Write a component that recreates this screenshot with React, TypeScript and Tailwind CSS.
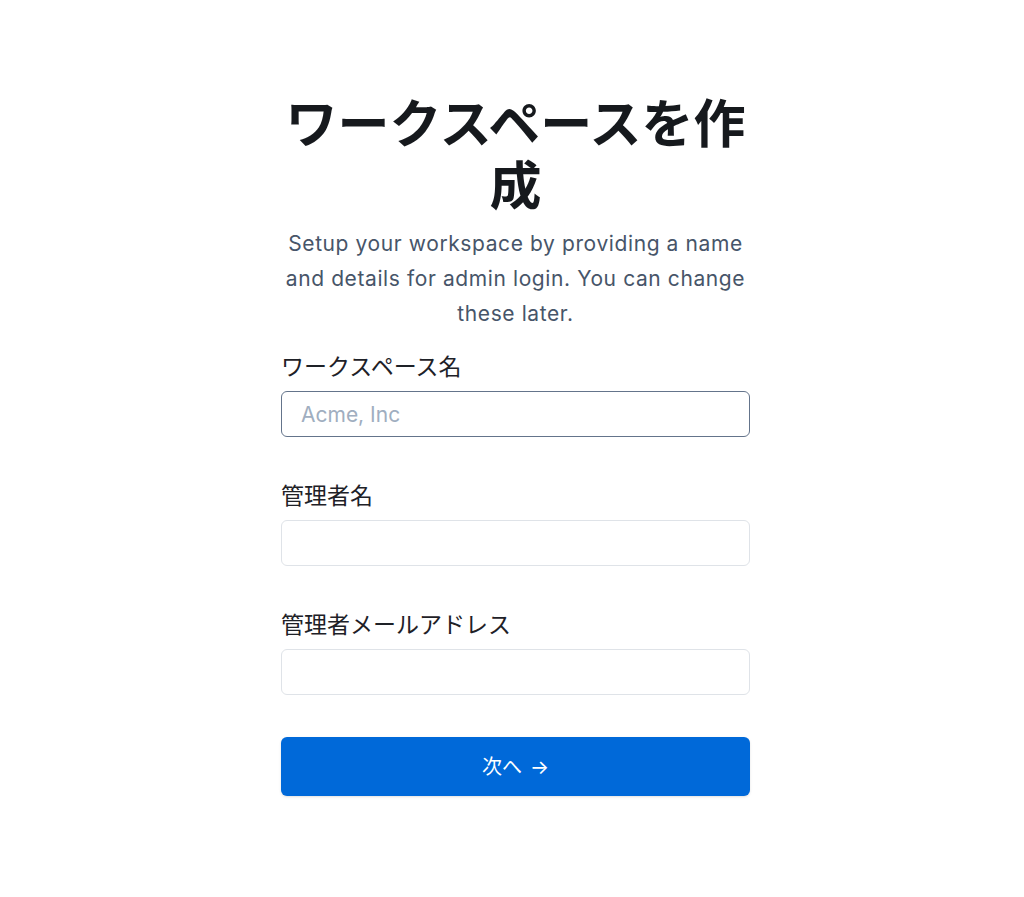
import React from 'react';

const font = { fontFamily: 'Inter, "Noto Sans CJK JP", sans-serif' };

const Field: React.FC<{ label: string; placeholder?: string; active?: boolean }> = ({ label, placeholder, active }) => (
  <div className="flex flex-col">
    <label className="text-[23px] leading-[30px] text-[#1e2127]">{label}</label>
    <input
      placeholder={placeholder}
      className={`mt-[9px] h-[46px] w-full rounded-[6px] border px-[19px] text-[21px] text-gray-900 outline-none placeholder:text-[#a0aec0] ${
        active ? 'border-[#64748b]' : 'border-[#dfe3e8]'
      }`}
    />
  </div>
);

export default function App() {
  return (
    <div className="min-h-screen bg-white pl-[7px]" style={font}>
      <div className="mx-auto flex w-[469px] flex-col pt-[94px]">
        <h1 className="text-center text-[52px] font-bold leading-[62px] text-[#16191d]">ワークスペースを作成</h1>
        <p className="mt-[8px] text-center text-[21px] leading-[35px] tracking-[0.6px] text-[#475569]">
          Setup your workspace by providing a name and details for admin login. You can change these later.
        </p>
        <div className="mt-[21px] flex flex-col gap-[44px]">
          <Field label="ワークスペース名" placeholder="Acme, Inc" active />
          <Field label="管理者名" />
          <Field label="管理者メールアドレス" />
        </div>
        <button className="mt-[42px] flex h-[59px] w-full items-center justify-center gap-2 rounded-[6px] bg-[#0069d9] text-[20px] text-white shadow-sm">
          次へ <span>→</span>
        </button>
      </div>
    </div>
  );
}
